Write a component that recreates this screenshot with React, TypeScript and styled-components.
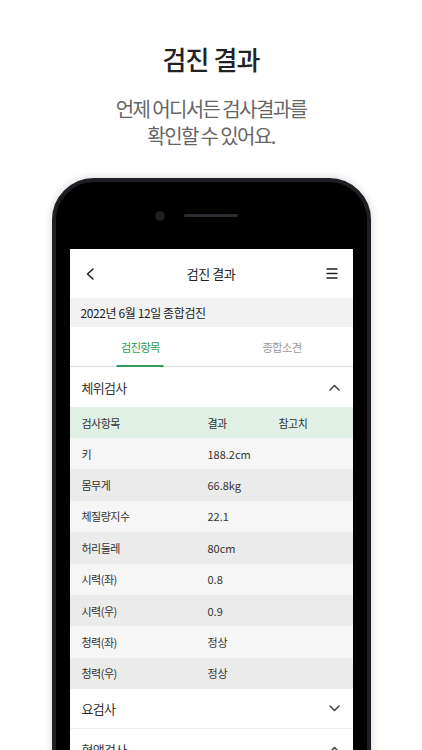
import React from "react";
import styled, { createGlobalStyle } from "styled-components";

const Global = createGlobalStyle`
  html, body { margin: 0; padding: 0; background: #fff; }
  body { font-family: "Noto Sans CJK KR", "Noto Sans", sans-serif; }
  * { box-sizing: border-box; }
`;

const Page = styled.div`
  width: 422px;
  height: 750px;
  overflow: hidden;
  display: flex;
  flex-direction: column;
  align-items: center;
  background: #fff;
`;

const Heading = styled.h1`
  margin: 41px 0 0;
  font-size: 26px;
  line-height: 36px;
  font-weight: 500;
  letter-spacing: -0.9px;
  color: #222;
`;

const Sub = styled.p`
  margin: 18px 0 0;
  font-size: 20px;
  line-height: 27px;
  font-weight: 400;
  letter-spacing: -1.6px;
  color: #666;
  text-align: center;
`;

const Phone = styled.div`
  margin-top: 29px;
  width: 319px;
  flex-shrink: 0;
  background: #000;
  border: 4px solid #1e1f24;
  border-radius: 42px;
  padding: 0 14px;
  box-shadow: 0 0 10px rgba(0, 0, 0, 0.18);
`;

const Notch = styled.div`
  height: 67px;
  display: flex;
  align-items: center;
  justify-content: center;
  gap: 19px;
`;

const Camera = styled.div`
  width: 10px;
  height: 10px;
  border-radius: 50%;
  background: #1f2025;
`;

const Speaker = styled.div`
  width: 54px;
  height: 3px;
  border-radius: 2px;
  background: #2a2b31;
`;

const Spacer = styled.div`
  width: 10px;
`;

const Screen = styled.div`
  background: #fff;
  height: 600px;
`;

const Header = styled.div`
  height: 49px;
  display: flex;
  align-items: center;
  justify-content: space-between;
  padding: 0 12px 0 12px;
`;

const HeaderTitle = styled.div`
  font-size: 13px;
  letter-spacing: -0.5px;
  color: #222;
`;

const IconBox = styled.div`
  width: 16px;
  height: 16px;
  display: flex;
  align-items: center;
  justify-content: center;
`;

const DateBar = styled.div`
  height: 29px;
  background: #f2f2f2;
  display: flex;
  align-items: center;
  padding-left: 11px;
  font-size: 12px;
  letter-spacing: -0.4px;
  color: #222;
`;

const Tabs = styled.div`
  height: 40px;
  display: grid;
  grid-template-columns: 1fr 1fr;
  border-bottom: 1px solid #dcdcdc;
`;

const Tab = styled.div<{ $active?: boolean }>`
  position: relative;
  display: flex;
  align-items: center;
  justify-content: center;
  font-size: 11.5px;
  letter-spacing: -0.8px;
  color: ${(p) => (p.$active ? "#2e9c58" : "#9a9a9a")};
  &::after {
    content: "";
    display: ${(p) => (p.$active ? "block" : "none")};
    position: absolute;
    bottom: -1px;
    left: 50%;
    transform: translateX(-50%);
    width: 47px;
    height: 2px;
    background: #2e9c58;
  }
`;

const Section = styled.div<{ $divider?: boolean }>`
  height: 40px;
  display: flex;
  align-items: center;
  justify-content: space-between;
  padding: 0 13px 0 12px;
  font-size: 13px;
  letter-spacing: -0.7px;
  color: #333;
  border-bottom: ${(p) => (p.$divider ? "1px solid #eeeeee" : "none")};
`;

const Row = styled.div<{ $tone: "head" | "light" | "dark" }>`
  height: ${(p) => (p.$tone === "head" ? "31px" : "31.375px")};
  display: grid;
  grid-template-columns: 126px 71px 1fr;
  align-items: center;
  padding-left: 12px;
  font-size: 11px;
  letter-spacing: -0.5px;
  color: #333;
  background: ${(p) =>
    p.$tone === "head" ? "#e1f0e5" : p.$tone === "light" ? "#f6f6f6" : "#ebebeb"};
`;

const Value = styled.span`
  letter-spacing: 0;
`;

const Chevron = ({ up }: { up?: boolean }) => (
  <svg width="11" height="7" viewBox="0 0 11 7" fill="none">
    <path
      d={up ? "M1 6 L5.5 1.5 L10 6" : "M1 1 L5.5 5.5 L10 1"}
      stroke="#444"
      strokeWidth="1.5"
      strokeLinecap="round"
      strokeLinejoin="round"
    />
  </svg>
);

const rows: [string, string][] = [
  ["키", "188.2cm"],
  ["몸무게", "66.8kg"],
  ["체질량지수", "22.1"],
  ["허리둘레", "80cm"],
  ["시력(좌)", "0.8"],
  ["시력(우)", "0.9"],
  ["청력(좌)", "정상"],
  ["청력(우)", "정상"],
];

export default function App() {
  return (
    <>
      <Global />
      <Page>
        <Heading>검진 결과</Heading>
        <Sub>
          언제 어디서든 검사결과를
          <br />
          확인할 수 있어요.
        </Sub>
        <Phone>
          <Notch>
            <Camera />
            <Speaker />
            <Spacer />
          </Notch>
          <Screen>
            <Header>
              <IconBox>
                <svg width="10" height="12" viewBox="0 0 10 12" fill="none">
                  <path
                    d="M8 1 L2.5 6 L8 11"
                    stroke="#222"
                    strokeWidth="1.6"
                    strokeLinecap="round"
                    strokeLinejoin="round"
                  />
                </svg>
              </IconBox>
              <HeaderTitle>검진 결과</HeaderTitle>
              <IconBox>
                <svg width="12" height="11" viewBox="0 0 12 11" fill="none">
                  <path d="M0.5 1 H11.5 M0.5 5.5 H11.5 M0.5 10 H11.5" stroke="#222" strokeWidth="1.6" />
                </svg>
              </IconBox>
            </Header>
            <DateBar>2022년 6월 12일 종합검진</DateBar>
            <Tabs>
              <Tab $active>검진항목</Tab>
              <Tab>종합소견</Tab>
            </Tabs>
            <Section>
              체위검사
              <Chevron up />
            </Section>
            <Row $tone="head">
              <span>검사항목</span>
              <span>결과</span>
              <span>참고치</span>
            </Row>
            {rows.map(([k, v], i) => (
              <Row key={k} $tone={i % 2 === 0 ? "light" : "dark"}>
                <span>{k}</span>
                <Value>{v}</Value>
                <span />
              </Row>
            ))}
            <Section $divider>
              요검사
              <Chevron />
            </Section>
            <Section>
              혈액검사
              <Chevron up />
            </Section>
          </Screen>
        </Phone>
      </Page>
    </>
  );
}
